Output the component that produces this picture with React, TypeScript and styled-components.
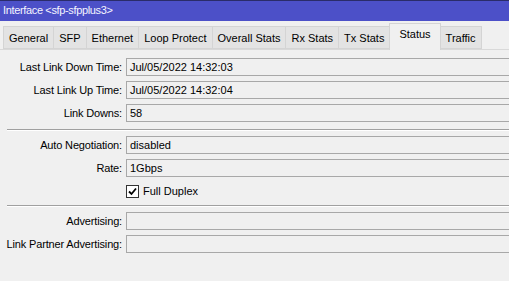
import styled, { createGlobalStyle } from "styled-components";

const GlobalStyle = createGlobalStyle`
    html, body {
        margin: 0;
        padding: 0;
        background: #f0f0f0;
        overflow: hidden;
    }
    body {
        font-family: "Liberation Sans", Arial, sans-serif;
        font-size: 11px;
        color: #000;
    }
`;

const tabs = ["General", "SFP", "Ethernet", "Loop Protect", "Overall Stats", "Rx Stats", "Tx Stats", "Status", "Traffic"];
const active = "Status";

export default function App() {
    return (
        <Window>
            <GlobalStyle />
            <TitleBar>Interface &lt;sfp-sfpplus3&gt;</TitleBar>
            <TabBar>
                {tabs.map((t) => (
                    <Tab key={t} $active={t === active}>{t}</Tab>
                ))}
            </TabBar>
            <Panel>
                <Row>
                    <Label>Last Link Down Time:</Label>
                    <Field>Jul/05/2022 14:32:03</Field>
                </Row>
                <Row>
                    <Label>Last Link Up Time:</Label>
                    <Field>Jul/05/2022 14:32:04</Field>
                </Row>
                <Row>
                    <Label>Link Downs:</Label>
                    <Field>58</Field>
                </Row>
                <Separator $top={2} />
                <Row>
                    <Label>Auto Negotiation:</Label>
                    <Field>disabled</Field>
                </Row>
                <Row>
                    <Label>Rate:</Label>
                    <Field>1Gbps</Field>
                </Row>
                <Row>
                    <Label />
                    <Check>
                        <Box>
                            <svg width="9" height="9" viewBox="0 0 9 9">
                                <path d="M1 4.5 L3.5 7 L8 1.5" fill="none" stroke="#000" strokeWidth="1.8" />
                            </svg>
                        </Box>
                        Full Duplex
                    </Check>
                </Row>
                <Separator $top={0} />
                <Row>
                    <Label>Advertising:</Label>
                    <Field />
                </Row>
                <Row>
                    <Label>Link Partner Advertising:</Label>
                    <Field />
                </Row>
            </Panel>
        </Window>
    );
}

const Window = styled.div`
    width: 509px;
    height: 281px;
    background: #f0f0f0;
    overflow: hidden;
`;

const TitleBar = styled.div`
    height: 21px;
    box-sizing: border-box;
    border-top: 1px solid #2a2c6a;
    background: #4c50c8;
    color: #f4f4ff;
    padding-left: 3px;
    line-height: 19px;
    font-size: 11px;
    letter-spacing: -0.35px;
`;

const TabBar = styled.div`
    display: flex;
    align-items: flex-end;
    height: 28px;
    padding-left: 4px;
    border-bottom: 1px solid #d9d9d9;
`;

const Tab = styled.div<{ $active?: boolean }>`
    box-sizing: border-box;
    height: ${(p) => (p.$active ? "27px" : "23px")};
    margin-bottom: ${(p) => (p.$active ? "-1px" : "0")};
    padding: 0 ${(p) => (p.$active ? "9px" : "5px")};
    display: flex;
    align-items: ${(p) => (p.$active ? "flex-start" : "center")};
    padding-top: ${(p) => (p.$active ? "4px" : "0")};
    background: ${(p) => (p.$active ? "#f0f0f0" : "#e3e3e3")};
    border: 1px solid #d4d4d4;
    border-bottom: ${(p) => (p.$active ? "none" : "1px solid #d4d4d4")};
    margin-left: -1px;
    z-index: ${(p) => (p.$active ? 1 : 0)};
    white-space: nowrap;
`;

const Panel = styled.div`
    display: flex;
    flex-direction: column;
    gap: 5px;
    padding-top: 8px;
`;

const Row = styled.div`
    display: flex;
    align-items: center;
    height: 18px;
`;

const Label = styled.div`
    width: 126px;
    flex: none;
    text-align: right;
    padding-right: 4px;
    box-sizing: border-box;
    white-space: nowrap;
    letter-spacing: -0.15px;
`;

const Field = styled.div`
    flex: none;
    width: 400px;
    height: 18px;
    box-sizing: border-box;
    border: 1px solid #a8a8a8;
    border-right: none;
    background: #f0f0f0;
    padding-left: 3px;
    line-height: 16px;
    white-space: nowrap;
`;

const Check = styled.div`
    display: flex;
    align-items: center;
    gap: 4px;
`;

const Box = styled.div`
    width: 13px;
    height: 13px;
    box-sizing: border-box;
    border: 1px solid #333;
    background: #fff;
    display: flex;
    align-items: center;
    justify-content: center;
`;

const Separator = styled.div<{ $top: number }>`
    margin-top: ${(p) => p.$top}px;
    margin-left: 7px;
    height: 0;
    border-top: 1px solid #a0a0a0;
    border-bottom: 1px solid #fff;
`;
